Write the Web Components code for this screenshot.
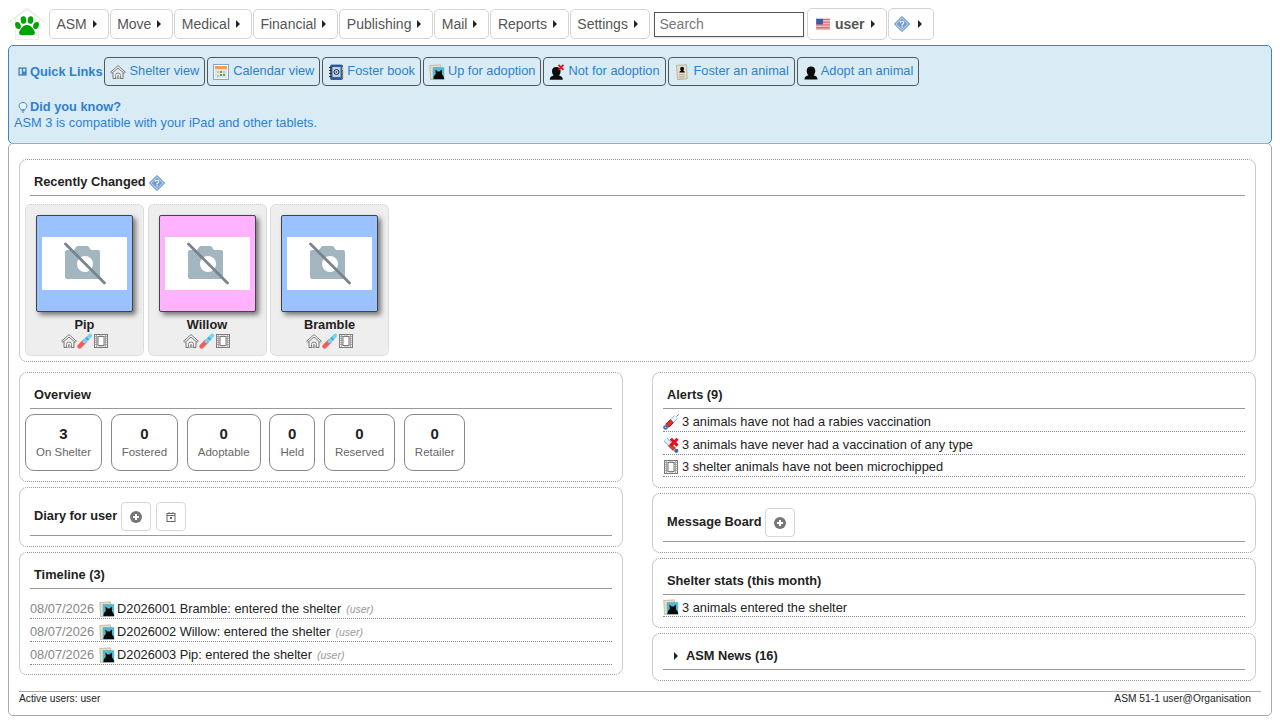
<!DOCTYPE html>
<html lang="en">
<head>
<meta charset="utf-8">
<title>ASM</title>
<style>
  html, body { height: 100%; }
  body { margin: 8px; font: 12.8px "Liberation Sans", Arial, sans-serif; color: #222; background: #fff; overflow: hidden; }
</style>
</head>
<body>
<asm-app>
  <asm-nav></asm-nav>
  <asm-quicklinks></asm-quicklinks>
  <asm-main>
    <asm-panel style="margin-bottom:10px" pad="0 0 5px 5px">
      <span slot="heading">Recently Changed <asm-icon name="help"></asm-icon></span>
      <asm-thumbs>
        <asm-thumb name="Pip" color="#99c2ff"></asm-thumb>
        <asm-thumb name="Willow" color="#ffb3ff"></asm-thumb>
        <asm-thumb name="Bramble" color="#99c2ff"></asm-thumb>
      </asm-thumbs>
    </asm-panel>
    <asm-columns>
      <div slot="left">
        <asm-panel pad="0 0 10px 5px">
          <span slot="heading">Overview</span>
          <asm-stats>
            <asm-stat num="3" label="On Shelter"></asm-stat>
            <asm-stat num="0" label="Fostered"></asm-stat>
            <asm-stat num="0" label="Adoptable"></asm-stat>
            <asm-stat num="0" label="Held"></asm-stat>
            <asm-stat num="0" label="Reserved"></asm-stat>
            <asm-stat num="0" label="Retailer"></asm-stat>
          </asm-stats>
        </asm-panel>
        <asm-panel tall pad="0 0 10px 0">
          <span slot="heading"><span style="margin-bottom:3px">Diary for user</span><asm-square icon="plus" style="margin-left:4px"></asm-square><asm-square icon="cal"></asm-square></span>
        </asm-panel>
        <asm-panel pad="7px 10px 9px 10px">
          <span slot="heading">Timeline (3)</span>
          <asm-row date="08/07/2026" icon="cat" by="(user)">D2026001 Bramble: entered the shelter</asm-row>
          <asm-row date="08/07/2026" icon="cat" by="(user)">D2026002 Willow: entered the shelter</asm-row>
          <asm-row date="08/07/2026" icon="cat" by="(user)">D2026003 Pip: entered the shelter</asm-row>
        </asm-panel>
      </div>
      <div slot="right">
        <asm-panel pad="0 10px 10px 10px">
          <span slot="heading">Alerts (9)</span>
          <asm-row icon="syringe">3 animals have not had a rabies vaccination</asm-row>
          <asm-row icon="syringex">3 animals have never had a vaccination of any type</asm-row>
          <asm-row icon="chip" h="22" style="padding-top:2px">3 shelter animals have not been microchipped</asm-row>
        </asm-panel>
        <asm-panel tall pad="0 0 10px 0">
          <span slot="heading"><span style="margin-bottom:3px">Message Board</span><asm-square icon="plus"></asm-square></span>
        </asm-panel>
        <asm-panel pad="0 10px 10px 10px">
          <span slot="heading">Shelter stats (this month)</span>
          <asm-row icon="cat" h="22">3 animals entered the shelter</asm-row>
        </asm-panel>
        <asm-panel pad="0 0 10px 0">
          <span slot="heading"><asm-caret style="margin:0 8px 0 7px"></asm-caret>ASM News (16)</span>
        </asm-panel>
      </div>
    </asm-columns>
    <asm-footer slot="footer"></asm-footer>
  </asm-main>
</asm-app>

<script>
const ICONS = {
  house: '<path d="M.6 8.200 8 1.600l7.400 6.600-1.300 1.100L8 4 1.900 9.300z" fill="#fff" stroke="#666" stroke-width=".9"/><path d="M3 9v5.500h10V9" fill="#eee" stroke="#666" stroke-width=".9"/><path d="M5.500 14.500v-3a2.500 2.500 0 0 1 5 0v3M7.300 14.500v-2.500a.8.8 0 0 1 1.500 0v2.500" fill="#fff" stroke="#666" stroke-width=".8"/>',
  calendar: '<rect x=".5" y=".5" width="15" height="15" fill="#fff" stroke="#7fa6d6"/><rect x="2" y="2" width="12" height="3" fill="#f0a050"/><rect x="2" y="5" width="12" height="9" fill="#dfe3ea"/><path d="M4 7h2v2H4zM10 7h2v2h-2zM4 11h2v2H4z" fill="#b9c3d6"/><path d="M7 7h2v2H7zM7 10h2v2H7zM10 10h2v2h-2z" fill="#5aa84a"/>',
  book: '<rect x="2.500" y="1" width="12" height="14.500" rx="1" fill="#2f5f9e" stroke="#1d3f70" stroke-width=".7"/><rect x="4.500" y="3" width="8" height="10" fill="#bcd0e8"/><circle cx="8.500" cy="8" r="2.500" fill="none" stroke="#234" stroke-width="1"/><circle cx="8.500" cy="8" r=".8" fill="#234"/><path d="M1 3.500h3M1 6.500h3M1 9.500h3M1 12.500h3" stroke="#333" stroke-width="1"/><path d="M14.500 3v3" stroke="#e0b020" stroke-width="1.400"/><path d="M14.500 7v3" stroke="#50a040" stroke-width="1.400"/><path d="M14.500 11v3" stroke="#d06030" stroke-width="1.400"/>',
  cat: '<path d="M.7 1.500 11.500.8l.6 2.700H4.200l.4 11.700-3 .4z" fill="#e5dfc6" stroke="#a8a288" stroke-width=".6"/><rect x="3.800" y="3.200" width="11.400" height="12.100" fill="#54b8d0"/><path d="M4.500 15.300c0-2.500.8-4.200 2.300-5.300L6.400 5.600l2.200 1.800h2l2.200-1.800.2 4.800c1.300 1 2.200 2.700 2.200 4.900z" fill="#0a0a0a"/>',
  person: '<path d="M1.500 15.500c0-2.300 1-3.400 3.800-4.300-1-1.100-1.600-2.600-1.600-4.400C3.700 4 5.500 2.500 8 2.500s4.300 1.500 4.300 4.300c0 1.800-.6 3.300-1.600 4.400 2.800.9 3.800 2 3.800 4.300z" fill="#0b0b0b"/>',
  personx: '<path d="M.8 15.800c0-2.300 1-3.400 3.800-4.300-1-1.100-1.600-2.600-1.600-4.400C3 4.300 4.800 3 7.300 3s4.300 1.300 4.300 4.100c0 1.800-.6 3.300-1.600 4.400 2.800.9 3.800 2 3.800 4.300z" fill="#0b0b0b"/><path d="M9.500.8l5 5M14.500.8l-5 5" stroke="#e01020" stroke-width="1.900"/>',
  lease: '<path d="M2.500 1.300 12.500.8l.7 14-9.500.8z" fill="#e5dfc6" stroke="#a8a288" stroke-width=".7"/><path d="M5.300 8.600c0-1 .7-1.500 1.600-1.800-.5-.5-.7-1.200-.7-2 0-1.300.8-2 1.900-2s1.900.7 1.900 2c0 .8-.2 1.500-.7 2 .9.300 1.600.8 1.600 1.800z" fill="#0b0b0b"/><path d="M5 10.500h6M5 12.300h6M5 14h5" stroke="#b3ad92" stroke-width=".8"/>',
  syringe: '<path d="M8.500 7.500 13 3" stroke="#8fb4dc" stroke-width="5.200"/><path d="M8.500 7.500 13 3" stroke="#eaf4fb" stroke-width="3.600"/><path d="M4 12 9 7" stroke="#5a2018" stroke-width="5"/><path d="M4 12 9 7" stroke="#e0302a" stroke-width="3.600"/><path d="m13.500 2.500 2.200-2.200" stroke="#789" stroke-width="1"/><circle cx="2.500" cy="13.500" r="2.300" fill="#3f66b8"/><circle cx="2.500" cy="13.500" r=".8" fill="#cde"/>',
  syringex: '<path d="M2.500 2.500 9 9" stroke="#8fa8c4" stroke-width="5"/><path d="M2.500 2.500 9 9" stroke="#e3edf5" stroke-width="3.400"/><path d="m6.500 7.500 5 5" stroke="#c8442c" stroke-width="4.200"/><circle cx="13.300" cy="13.800" r="2.100" fill="#3f66b8"/><path d="m7.800 1.800 6.800 6.800M14.600 1.800 7.800 8.600" stroke="#e01020" stroke-width="3"/>',
  dropper: '<path d="m2.600 13.400 5-5" stroke="#f25c5c" stroke-width="4.400" stroke-linecap="round"/><path d="m7.600 8.400 5.600-5.800" stroke="#78d4ec" stroke-width="3.800" stroke-linecap="round"/><path d="m9.500 6.500 1.400-1.400" stroke="#4aa8e0" stroke-width="3.800"/>',
  chip: '<rect x="1.500" y="1.500" width="13" height="13" fill="#f4f4f4" stroke="#777"/><rect x="5" y="3.500" width="6" height="9" fill="#fff" stroke="#777" stroke-width="1"/><path d="M1.500 3.500H5M1.500 5.500H5M1.500 7.500H5M1.500 9.500H5M1.500 11.500H5M11 3.500h3.500M11 5.500h3.500M11 7.500h3.500M11 9.500h3.500M11 11.500h3.500M3.500 1.500v13M12.500 1.500v13M7 1.500v2M9 1.500v2M7 12.500v2M9 12.500v2" stroke="#999" stroke-width=".8"/>',
  help: '<path d="M8 .5 15.500 8 8 15.500.5 8z" fill="#b5cdea" stroke="#4f7fbc"/><path d="M8 2.800 13.200 8 8 13.200 2.800 8z" fill="#6f9ad2"/><path d="M6.300 6.800c0-2.100 3.400-2.100 3.400 0 0 1.300-1.700 1.300-1.700 2.600" fill="none" stroke="#fff" stroke-width="1.200"/><circle cx="8" cy="11" r=".8" fill="#fff"/>',
  quick: '<rect x="2" y="2" width="12" height="12" fill="#3d85c6"/><rect x="4" y="4" width="3" height="8" fill="#d9ecf6"/><rect x="9" y="4" width="3" height="4" fill="#d9ecf6"/>',
  bulb: '<path d="M4.500 10C3.300 9 2.800 7.900 2.800 6.500 2.800 3.800 5 2 8 2s5.200 1.800 5.200 4.500c0 1.400-.5 2.500-1.700 3.500-.6.500-.9 1-1 1.700h-5c-.1-.7-.4-1.200-1-1.700z" fill="#e6f1f8" stroke="#3d85c6" stroke-width="1.300"/><path d="M6 13h4M6.700 14.800h2.600" stroke="#3d85c6" stroke-width="1.300"/>',
  flag: '<rect y="2" width="16" height="12" fill="#fff"/><path d="M0 2.900h16M0 4.700h16M0 6.500h16M0 8.300h16M0 10.100h16M0 11.900h16M0 13.500h16" stroke="#d8303a" stroke-width=".9"/><rect y="2" width="8" height="6.500" fill="#4a55a8"/><rect y="2" width="16" height="12" fill="none" stroke="#bbb" stroke-width=".5"/>',
  plus: '<circle cx="8" cy="8" r="6" fill="#777"/><path d="M8 5v6M5 8h6" stroke="#fff" stroke-width="2"/>',
  cal: '<rect x="4" y="4.500" width="8" height="8" fill="none" stroke="#666" stroke-width="1"/><path d="M4 6.500h8M6 3v2M10 3v2" stroke="#666" stroke-width="1"/><rect x="7" y="8" width="2" height="2" fill="#666"/>'
};

class AsmIcon extends HTMLElement {
  connectedCallback() {
    const size = this.getAttribute('size') || 16;
    this.attachShadow({ mode: 'open' }).innerHTML = `
      <style>:host { display: inline-block; width: ${size}px; height: ${size}px; vertical-align: middle; line-height: 0; } svg { display: block; }</style>
      <svg width="${size}" height="${size}" viewBox="0 0 16 16">${ICONS[this.getAttribute('name')] || ''}</svg>`;
  }
}

class AsmCaret extends HTMLElement {
  connectedCallback() {
    this.attachShadow({ mode: 'open' }).innerHTML = `
      <style>:host { display: inline-block; width: 0; height: 0; border-left: 4px solid #222; border-top: 4px solid transparent; border-bottom: 4px solid transparent; vertical-align: 0; }</style>`;
  }
}

class AsmApp extends HTMLElement {
  connectedCallback() {
    this.attachShadow({ mode: 'open' }).innerHTML = `
      <style>:host { display: flex; flex-direction: column; width: 1264px; }</style>
      <slot></slot>`;
  }
}

class AsmMenuBtn extends HTMLElement {
  connectedCallback() {
    const gap = this.getAttribute('gap') || 6;
    this.attachShadow({ mode: 'open' }).innerHTML = `
      <style>
        :host { display: flex; align-items: center; box-sizing: border-box; height: 30px; border: 1px solid #d3d3d3; border-radius: 5px; background: #fff; color: #555; font-size: 14px; padding: 0 11px 0 6.400px; margin-right: 1px; white-space: nowrap; }
        :host([tall]) { height: 32px; margin-top: -1px; }
        asm-caret { margin-left: ${gap}px; }
      </style>
      <slot></slot><asm-caret></asm-caret>`;
  }
}

class AsmNav extends HTMLElement {
  connectedCallback() {
    this.attachShadow({ mode: 'open' }).innerHTML = `
      <style>
        :host { display: flex; align-items: center; height: 32px; }
        .logo { width: 38px; height: 32px; margin-right: 3px; flex: none; }
        input { box-sizing: border-box; width: 150px; height: 25px; margin: 0 3px 0 3.600px; padding: 0 4px; border: 1px solid #555; border-radius: 0; font: 14px "Liberation Sans", Arial, sans-serif; color: #555; box-shadow: 0 1px 2px #ddd; outline: none; }
        input::placeholder { color: #777; }
        b { font-weight: bold; }
      </style>
      <svg class="logo" viewBox="0 0 38 32">
        <path d="M.5 14.500 19 .8l18 13.700" fill="none" stroke="#dcecdc" stroke-width="1.200"/>
        <path d="M7.500 9.500V31.500h23V9.500" fill="none" stroke="#e6f2e6" stroke-width="1"/>
        <g fill="#00a400">
          <ellipse cx="10" cy="17.500" rx="2.700" ry="3.600" transform="rotate(-20 10 17.500)"/>
          <ellipse cx="15.500" cy="12" rx="2.800" ry="3.800" transform="rotate(-8 15.500 12)"/>
          <ellipse cx="22.500" cy="12" rx="2.800" ry="3.800" transform="rotate(8 22.500 12)"/>
          <ellipse cx="28" cy="17.500" rx="2.700" ry="3.600" transform="rotate(20 28 17.500)"/>
          <path d="M19 17c3.200 0 4.600 2 6.300 4.200 1.800 2.200 2.200 4 .9 5.400-1.400 1.400-3.800.4-7.200.4s-5.800 1-7.200-.4c-1.300-1.400-.9-3.200.9-5.400C14.400 19 15.800 17 19 17z"/>
        </g>
      </svg>
      <asm-menu-btn>ASM</asm-menu-btn>
      <asm-menu-btn>Move</asm-menu-btn>
      <asm-menu-btn>Medical</asm-menu-btn>
      <asm-menu-btn>Financial</asm-menu-btn>
      <asm-menu-btn>Publishing</asm-menu-btn>
      <asm-menu-btn>Mail</asm-menu-btn>
      <asm-menu-btn>Reports</asm-menu-btn>
      <asm-menu-btn>Settings</asm-menu-btn>
      <input placeholder="Search">
      <asm-menu-btn tall gap="7"><asm-icon name="flag" size="14" style="margin:0 5px 0 1px"></asm-icon><b>user</b></asm-menu-btn>
      <asm-menu-btn tall gap="8"><asm-icon name="help" style="margin-left:-2px"></asm-icon></asm-menu-btn>`;
  }
}

class AsmLinkBtn extends HTMLElement {
  connectedCallback() {
    this.attachShadow({ mode: 'open' }).innerHTML = `
      <style>
        :host { display: inline-flex; align-items: center; box-sizing: border-box; height: 29px; padding: 0 5px 2px; border: 1px solid #555; border-radius: 4px; color: #2f7fce; font-size: 12.800px; white-space: nowrap; margin-right: 2px; }
        asm-icon { margin: 2px ${this.getAttribute('gap') || 3}px 0 0; }
      </style>
      <asm-icon name="${this.getAttribute('icon')}"></asm-icon><slot></slot>`;
  }
}

class AsmQuicklinks extends HTMLElement {
  connectedCallback() {
    this.attachShadow({ mode: 'open' }).innerHTML = `
      <style>
        :host { display: block; box-sizing: border-box; height: 99px; margin-top: 5px; padding: 11px 5px 0 5px; background: #d9ecf6; border: 1px solid #3d85c6; border-radius: 5px; color: #2f7fce; font-size: 12.800px; }
        .links { display: flex; align-items: center; height: 29px; }
        .title { font-weight: bold; margin: 0 1px 0 3px; display: flex; align-items: center; white-space: nowrap; }
        .title asm-icon { margin-right: 2px; }
        .know { margin-top: 13px; margin-left: 3px; font-weight: bold; display: flex; align-items: center; height: 15px; }
        .know asm-icon { margin-right: 1px; }
        .tip { margin-top: 1px; line-height: 16px; }
      </style>
      <div class="links">
        <span class="title"><asm-icon name="quick" size="11"></asm-icon>Quick Links</span>
        <asm-link-btn icon="house" gap="4">Shelter view</asm-link-btn>
        <asm-link-btn icon="calendar" gap="4">Calendar view</asm-link-btn>
        <asm-link-btn icon="book">Foster book</asm-link-btn>
        <asm-link-btn icon="cat">Up for adoption</asm-link-btn>
        <asm-link-btn icon="personx">Not for adoption</asm-link-btn>
        <asm-link-btn icon="lease" gap="4">Foster an animal</asm-link-btn>
        <asm-link-btn icon="person" gap="2">Adopt an animal</asm-link-btn>
      </div>
      <div class="know"><asm-icon name="bulb" size="12"></asm-icon>Did you know?</div>
      <div class="tip">ASM 3 is compatible with your iPad and other tablets.</div>`;
  }
}

class AsmMain extends HTMLElement {
  connectedCallback() {
    this.attachShadow({ mode: 'open' }).innerHTML = `
      <style>
        :host { display: flex; flex-direction: column; box-sizing: border-box; height: 573px; margin-top: -1px; padding: 15px 10px 0 10px; border: 1px solid #aaa; border-radius: 5px; background: #fff; }
        .content { padding-right: 5px; }
      </style>
      <div class="content"><slot></slot></div>
      <slot name="footer"></slot>`;
  }
}

class AsmPanel extends HTMLElement {
  connectedCallback() {
    const pad = this.getAttribute('pad') || '0';
    this.attachShadow({ mode: 'open' }).innerHTML = `
      <style>
        :host { display: block; box-sizing: border-box; border: 1px solid #ccc; border-top: 1px dotted #999; border-bottom: 1px dotted #999; border-radius: 8px; background: #fff; margin-bottom: 5px; }
        h3 { margin: 0 10px; height: 15px; padding: 14px 4px 6px; border-bottom: 1px solid #999; font-size: 12.800px; line-height: 15px; font-weight: bold; color: #222; white-space: nowrap; }
        :host([tall]) h3 { height: 29px; padding-bottom: 4px; display: flex; align-items: center; }
        ::slotted(span) { display: inline-block; }
        :host([tall]) ::slotted(span) { display: flex; align-items: center; }
        .body { padding: ${pad}; }
      </style>
      <h3><slot name="heading"></slot></h3>
      <div class="body"><slot></slot></div>`;
  }
}

class AsmSquare extends HTMLElement {
  connectedCallback() {
    const prev = this.previousElementSibling;
    const left = prev && prev.localName === 'asm-square' ? 5 : 3;
    this.attachShadow({ mode: 'open' }).innerHTML = `
      <style>
        :host { display: inline-flex; align-items: center; justify-content: center; box-sizing: border-box; width: 30px; height: 29px; margin-left: ${left}px; border: 1px solid #d6d6d6; border-radius: 4px; }
      </style>
      <asm-icon name="${this.getAttribute('icon')}"></asm-icon>`;
  }
}

class AsmThumbs extends HTMLElement {
  connectedCallback() {
    this.attachShadow({ mode: 'open' }).innerHTML = `
      <style>:host { display: flex; gap: 3.500px; padding-top: 8px; }</style>
      <slot></slot>`;
  }
}

class AsmThumb extends HTMLElement {
  connectedCallback() {
    this.attachShadow({ mode: 'open' }).innerHTML = `
      <style>
        :host { display: flex; flex-direction: column; align-items: center; box-sizing: border-box; width: 119px; height: 152px; padding-top: 10px; background: #eee; border: 1px dotted #ccc; border-radius: 6px; }
        .pic { box-sizing: border-box; width: 97px; height: 97px; display: flex; align-items: center; justify-content: center; border: 1px solid #444; border-radius: 2px; box-shadow: 3px 3px 5px #777; background: ${this.getAttribute('color')}; }
        .pic svg { display: block; }
        .name { margin-top: 5px; font-weight: bold; font-size: 12.800px; line-height: 15px; color: #222; }
        .icons { display: flex; gap: 0; margin-top: 1px; }
      </style>
      <div class="pic">
        <svg width="85" height="53" viewBox="0 0 85 53">
          <rect width="85" height="53" fill="#fff"/>
          <path d="M23 15a2 2 0 0 1 2-2h7l3-4h11l3 4h7a2 2 0 0 1 2 2v25a2 2 0 0 1-2 2H25a2 2 0 0 1-2-2z" fill="#a3b5bf"/>
          <circle cx="43" cy="27" r="8" fill="#fff"/>
          <path d="m23.500 7 39 39" stroke="#788590" stroke-width="2.800" stroke-linecap="round"/>
        </svg>
      </div>
      <div class="name">${this.getAttribute('name')}</div>
      <div class="icons">
        <asm-icon name="house"></asm-icon><asm-icon name="dropper"></asm-icon><asm-icon name="chip"></asm-icon>
      </div>`;
  }
}

class AsmColumns extends HTMLElement {
  connectedCallback() {
    this.attachShadow({ mode: 'open' }).innerHTML = `
      <style>:host { display: grid; grid-template-columns: 604px 604px; column-gap: 29px; }</style>
      <slot name="left"></slot><slot name="right"></slot>`;
  }
}

class AsmStats extends HTMLElement {
  connectedCallback() {
    this.attachShadow({ mode: 'open' }).innerHTML = `
      <style>:host { display: flex; gap: 8.700px; padding-top: 5px; }</style>
      <slot></slot>`;
  }
}

class AsmStat extends HTMLElement {
  connectedCallback() {
    this.attachShadow({ mode: 'open' }).innerHTML = `
      <style>
        :host { display: flex; flex-direction: column; align-items: center; box-sizing: border-box; min-width: 46px; height: 57px; padding: 10px 10px 0; border: 1px solid #888; border-radius: 9px; }
        b { font-size: 15px; line-height: 17px; color: #222; }
        span { margin-top: 3px; font-size: 11.500px; line-height: 14px; color: #666; white-space: nowrap; }
      </style>
      <b>${this.getAttribute('num')}</b><span>${this.getAttribute('label')}</span>`;
  }
}

class AsmRow extends HTMLElement {
  connectedCallback() {
    const date = this.getAttribute('date');
    const by = this.getAttribute('by');
    this.attachShadow({ mode: 'open' }).innerHTML = `
      <style>
        :host { display: flex; align-items: center; box-sizing: border-box; height: ${(this.getAttribute('h') || 23)}px; padding-top: 3px; border-bottom: 1px dotted #888; font-size: 12.800px; color: #222; white-space: nowrap; }
        .date { color: #888; margin-right: 5px; }
        asm-icon { margin-right: ${date ? 2 : 3}px; }
        i { color: #999; font-size: 10.500px; margin-left: 5px; }
      </style>
      ${date ? `<span class="date">${date}</span>` : ''}
      <asm-icon name="${this.getAttribute('icon')}"></asm-icon><slot></slot>
      ${by ? `<i>${by}</i>` : ''}`;
  }
}

class AsmFooter extends HTMLElement {
  connectedCallback() {
    this.attachShadow({ mode: 'open' }).innerHTML = `
      <style>
        :host { display: flex; justify-content: space-between; margin-top: 5px; padding: 0 10px 0 0; border-top: 1px solid #aaa; font-size: 10.240px; line-height: 13px; color: #222; }
      </style>
      <span>Active users: user</span><span>ASM 51-1 user@Organisation</span>`;
  }
}

customElements.define('asm-icon', AsmIcon);
customElements.define('asm-caret', AsmCaret);
customElements.define('asm-app', AsmApp);
customElements.define('asm-menu-btn', AsmMenuBtn);
customElements.define('asm-nav', AsmNav);
customElements.define('asm-link-btn', AsmLinkBtn);
customElements.define('asm-quicklinks', AsmQuicklinks);
customElements.define('asm-main', AsmMain);
customElements.define('asm-panel', AsmPanel);
customElements.define('asm-square', AsmSquare);
customElements.define('asm-thumbs', AsmThumbs);
customElements.define('asm-thumb', AsmThumb);
customElements.define('asm-columns', AsmColumns);
customElements.define('asm-stats', AsmStats);
customElements.define('asm-stat', AsmStat);
customElements.define('asm-row', AsmRow);
customElements.define('asm-footer', AsmFooter);
</script>
</body>
</html>
